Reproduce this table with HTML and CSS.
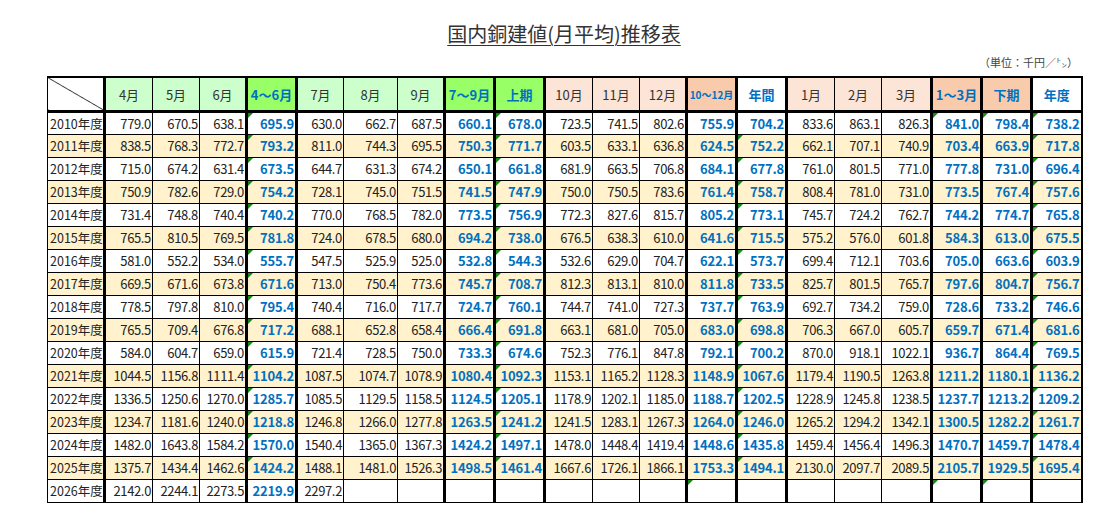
FILE: index.html
```html
<!DOCTYPE html>
<html lang="ja">
<head>
<meta charset="utf-8">
<title>国内銅建値(月平均)推移表</title>
<link rel="stylesheet" href="styles.css">
</head>
<body>
<div class="page">
  <h1 class="title">国内銅建値(月平均)推移表</h1>
  <p class="unit">（単位：千円／㌧）</p>
  <table class="grid">
    <colgroup>
      <col class="c-label"><col class="c48"><col class="c47"><col class="c47"><col class="c50">
      <col class="c47"><col class="c54"><col class="c47"><col class="c50"><col class="c50">
      <col class="c48"><col class="c47"><col class="c47"><col class="c50"><col class="c50">
      <col class="c48"><col class="c47"><col class="c50"><col class="c50"><col class="c50"><col class="c50">
    </colgroup>
    <thead>
      <tr>
        <th class="corner"></th>
        <th class="h-g1">4月</th><th class="h-g1">5月</th><th class="h-g1">6月</th><th class="h-g2">4～6月</th>
        <th class="h-g1">7月</th><th class="h-g1">8月</th><th class="h-g1">9月</th><th class="h-g2">7～9月</th><th class="h-g2">上期</th>
        <th class="h-p1">10月</th><th class="h-p1">11月</th><th class="h-p1">12月</th><th class="h-p2 small">10～12月</th><th class="h-w">年間</th>
        <th class="h-p1">1月</th><th class="h-p1">2月</th><th class="h-p1">3月</th><th class="h-p2">1～3月</th><th class="h-p2">下期</th><th class="h-w">年度</th>
      </tr>
    </thead>
    <tbody>
      <tr><th>2010年度</th><td>779.0</td><td>670.5</td><td>638.1</td><td class="m">695.9</td><td>630.0</td><td>662.7</td><td>687.5</td><td>660.1</td><td class="m">678.0</td><td>723.5</td><td>741.5</td><td>802.6</td><td>755.9</td><td>704.2</td><td>833.6</td><td>863.1</td><td>826.3</td><td class="m">841.0</td><td class="m">798.4</td><td class="m">738.2</td></tr>
      <tr class="alt"><th>2011年度</th><td>838.5</td><td>768.3</td><td>772.7</td><td class="m">793.2</td><td>811.0</td><td>744.3</td><td>695.5</td><td>750.3</td><td class="m">771.7</td><td>603.5</td><td>633.1</td><td>636.8</td><td>624.5</td><td class="m">752.2</td><td>662.1</td><td>707.1</td><td>740.9</td><td>703.4</td><td>663.9</td><td class="m">717.8</td></tr>
      <tr><th>2012年度</th><td>715.0</td><td>674.2</td><td>631.4</td><td class="m">673.5</td><td>644.7</td><td>631.3</td><td>674.2</td><td>650.1</td><td class="m">661.8</td><td>681.9</td><td>663.5</td><td>706.8</td><td>684.1</td><td class="m">677.8</td><td>761.0</td><td>801.5</td><td>771.0</td><td>777.8</td><td>731.0</td><td class="m">696.4</td></tr>
      <tr class="alt"><th>2013年度</th><td>750.9</td><td>782.6</td><td>729.0</td><td class="m">754.2</td><td>728.1</td><td>745.0</td><td>751.5</td><td>741.5</td><td class="m">747.9</td><td>750.0</td><td>750.5</td><td>783.6</td><td>761.4</td><td class="m">758.7</td><td>808.4</td><td>781.0</td><td>731.0</td><td>773.5</td><td>767.4</td><td class="m">757.6</td></tr>
      <tr><th>2014年度</th><td>731.4</td><td>748.8</td><td>740.4</td><td class="m">740.2</td><td>770.0</td><td>768.5</td><td>782.0</td><td>773.5</td><td class="m">756.9</td><td>772.3</td><td>827.6</td><td>815.7</td><td>805.2</td><td class="m">773.1</td><td>745.7</td><td>724.2</td><td>762.7</td><td>744.2</td><td>774.7</td><td class="m">765.8</td></tr>
      <tr class="alt"><th>2015年度</th><td>765.5</td><td>810.5</td><td>769.5</td><td class="m">781.8</td><td>724.0</td><td>678.5</td><td>680.0</td><td>694.2</td><td class="m">738.0</td><td>676.5</td><td>638.3</td><td>610.0</td><td>641.6</td><td class="m">715.5</td><td>575.2</td><td>576.0</td><td>601.8</td><td>584.3</td><td>613.0</td><td class="m">675.5</td></tr>
      <tr><th>2016年度</th><td>581.0</td><td>552.2</td><td>534.0</td><td class="m">555.7</td><td>547.5</td><td>525.9</td><td>525.0</td><td>532.8</td><td class="m">544.3</td><td>532.6</td><td>629.0</td><td>704.7</td><td>622.1</td><td class="m">573.7</td><td>699.4</td><td>712.1</td><td>703.6</td><td>705.0</td><td>663.6</td><td class="m">603.9</td></tr>
      <tr class="alt"><th>2017年度</th><td>669.5</td><td>671.6</td><td>673.8</td><td class="m">671.6</td><td>713.0</td><td>750.4</td><td>773.6</td><td>745.7</td><td class="m">708.7</td><td>812.3</td><td>813.1</td><td>810.0</td><td>811.8</td><td class="m">733.5</td><td>825.7</td><td>801.5</td><td>765.7</td><td>797.6</td><td>804.7</td><td class="m">756.7</td></tr>
      <tr><th>2018年度</th><td>778.5</td><td>797.8</td><td>810.0</td><td class="m">795.4</td><td>740.4</td><td>716.0</td><td>717.7</td><td>724.7</td><td class="m">760.1</td><td>744.7</td><td>741.0</td><td>727.3</td><td>737.7</td><td class="m">763.9</td><td>692.7</td><td>734.2</td><td>759.0</td><td>728.6</td><td>733.2</td><td class="m">746.6</td></tr>
      <tr class="alt"><th>2019年度</th><td>765.5</td><td>709.4</td><td>676.8</td><td class="m">717.2</td><td>688.1</td><td>652.8</td><td>658.4</td><td>666.4</td><td class="m">691.8</td><td>663.1</td><td>681.0</td><td>705.0</td><td>683.0</td><td class="m">698.8</td><td>706.3</td><td>667.0</td><td>605.7</td><td>659.7</td><td>671.4</td><td class="m">681.6</td></tr>
      <tr><th>2020年度</th><td>584.0</td><td>604.7</td><td>659.0</td><td class="m">615.9</td><td>721.4</td><td>728.5</td><td>750.0</td><td>733.3</td><td class="m">674.6</td><td>752.3</td><td>776.1</td><td>847.8</td><td>792.1</td><td class="m">700.2</td><td>870.0</td><td>918.1</td><td>1022.1</td><td>936.7</td><td>864.4</td><td class="m">769.5</td></tr>
      <tr class="alt"><th>2021年度</th><td>1044.5</td><td>1156.8</td><td>1111.4</td><td class="m">1104.2</td><td>1087.5</td><td>1074.7</td><td>1078.9</td><td>1080.4</td><td class="m">1092.3</td><td>1153.1</td><td>1165.2</td><td>1128.3</td><td>1148.9</td><td class="m">1067.6</td><td>1179.4</td><td>1190.5</td><td>1263.8</td><td>1211.2</td><td>1180.1</td><td class="m">1136.2</td></tr>
      <tr><th>2022年度</th><td>1336.5</td><td>1250.6</td><td>1270.0</td><td class="m">1285.7</td><td>1085.5</td><td>1129.5</td><td>1158.5</td><td>1124.5</td><td class="m">1205.1</td><td>1178.9</td><td>1202.1</td><td>1185.0</td><td>1188.7</td><td class="m">1202.5</td><td>1228.9</td><td>1245.8</td><td>1238.5</td><td>1237.7</td><td>1213.2</td><td class="m">1209.2</td></tr>
      <tr class="alt"><th>2023年度</th><td>1234.7</td><td>1181.6</td><td>1240.0</td><td class="m">1218.8</td><td>1246.8</td><td>1266.0</td><td>1277.8</td><td>1263.5</td><td class="m">1241.2</td><td>1241.5</td><td>1283.1</td><td>1267.3</td><td>1264.0</td><td class="m">1246.0</td><td>1265.2</td><td>1294.2</td><td>1342.1</td><td>1300.5</td><td>1282.2</td><td class="m">1261.7</td></tr>
      <tr><th>2024年度</th><td>1482.0</td><td>1643.8</td><td>1584.2</td><td class="m">1570.0</td><td>1540.4</td><td>1365.0</td><td>1367.3</td><td>1424.2</td><td class="m">1497.1</td><td>1478.0</td><td>1448.4</td><td>1419.4</td><td>1448.6</td><td class="m">1435.8</td><td>1459.4</td><td>1456.4</td><td>1496.3</td><td>1470.7</td><td>1459.7</td><td class="m">1478.4</td></tr>
      <tr class="alt"><th>2025年度</th><td>1375.7</td><td>1434.4</td><td>1462.6</td><td class="m">1424.2</td><td>1488.1</td><td>1481.0</td><td>1526.3</td><td>1498.5</td><td class="m">1461.4</td><td>1667.6</td><td>1726.1</td><td>1866.1</td><td>1753.3</td><td class="m">1494.1</td><td>2130.0</td><td>2097.7</td><td>2089.5</td><td>2105.7</td><td>1929.5</td><td class="m">1695.4</td></tr>
      <tr><th>2026年度</th><td>2142.0</td><td>2244.1</td><td>2273.5</td><td>2219.9</td><td>2297.2</td><td></td><td></td><td></td><td></td><td></td><td></td><td></td><td class="m"></td><td></td><td></td><td></td><td></td><td class="m"></td><td class="m"></td><td></td></tr>
    </tbody>
  </table>
</div>
</body>
</html>
```
FILE: styles.css
```css
body {
  margin: 0;
  background: #fff;
  color: #222;
  font-family: "Noto Sans CJK JP", "Liberation Sans", sans-serif;
}

.page {
  width: 1034px;
  padding: 21px 0 0 47px;
}

.title {
  margin: 0;
  font-size: 20px;
  line-height: 26px;
  font-weight: normal;
  text-align: center;
  text-decoration: underline;
  text-decoration-thickness: 1px;
  text-underline-offset: 3px;
  color: #333;
}

.unit {
  margin: 8px 3px 0 0;
  font-size: 11px;
  line-height: 14px;
  text-align: right;
  color: #444;
}

.grid {
  margin-top: 7px;
  border-collapse: collapse;
  table-layout: fixed;
  width: 1034px;
  border-top: 2px solid #000;
  border-left: 1px solid #000;
  border-bottom: 1px solid #000;
  border-right: 2px solid #000;
  font-size: 13px;
}

.c-label { width: 57px; }
.c47 { width: 47px; }
.c48 { width: 48px; }
.c50 { width: 50px; }
.c54 { width: 54px; }

.grid th,
.grid td {
  border: 1px solid #000;
  padding: 0;
  overflow: hidden;
  white-space: nowrap;
}

.grid thead tr { height: 34px; }
.grid tbody tr { height: 23px; }

.grid thead th {
  border-bottom: 3px solid #000;
  font-weight: normal;
  font-size: 13px;
  color: #333;
  text-align: center;
  padding-top: 2px;
}

.grid tbody th {
  font-weight: normal;
  text-align: left;
  padding-left: 2px;
  font-size: 12.5px;
  color: #222;
}

.grid tbody td {
  text-align: right;
  padding-right: 1px;
  letter-spacing: -0.35px;
  color: #222;
  position: relative;
}

/* thick column separators */
.grid tr > :nth-child(1),
.grid tr > :nth-child(4),
.grid tr > :nth-child(5),
.grid tr > :nth-child(8),
.grid tr > :nth-child(9),
.grid tr > :nth-child(10),
.grid tr > :nth-child(13),
.grid tr > :nth-child(14),
.grid tr > :nth-child(15),
.grid tr > :nth-child(18),
.grid tr > :nth-child(19),
.grid tr > :nth-child(20) {
  border-right: 3px solid #000;
}

/* aggregate columns: bold blue */
.grid tbody td:nth-child(5),
.grid tbody td:nth-child(9),
.grid tbody td:nth-child(10),
.grid tbody td:nth-child(14),
.grid tbody td:nth-child(15),
.grid tbody td:nth-child(19),
.grid tbody td:nth-child(20),
.grid tbody td:nth-child(21) {
  color: #0070c0;
  font-weight: bold;
  letter-spacing: -0.2px;
}

.grid tbody tr.alt > * { background: #fff2cc; }

/* header fills */
.h-g1 { background: #ccffcc; }
.h-g2 { background: #99ff66; }
.h-p1 { background: #fce4d6; }
.h-p2 { background: #f8cbad; }
.h-w { background: #fff; }

.grid thead .h-g2,
.grid thead .h-p2,
.grid thead .h-w {
  color: #0070c0;
  font-weight: bold;
}

.grid thead .small { font-size: 10px; }

.corner {
  background: linear-gradient(to top right, transparent calc(50% - 0.7px), #000 50%, transparent calc(50% + 0.7px));
}

/* excel error indicator */
.m::before {
  content: "";
  position: absolute;
  top: 0;
  left: 0;
  border-top: 5px solid #138a13;
  border-right: 5px solid transparent;
}
```
